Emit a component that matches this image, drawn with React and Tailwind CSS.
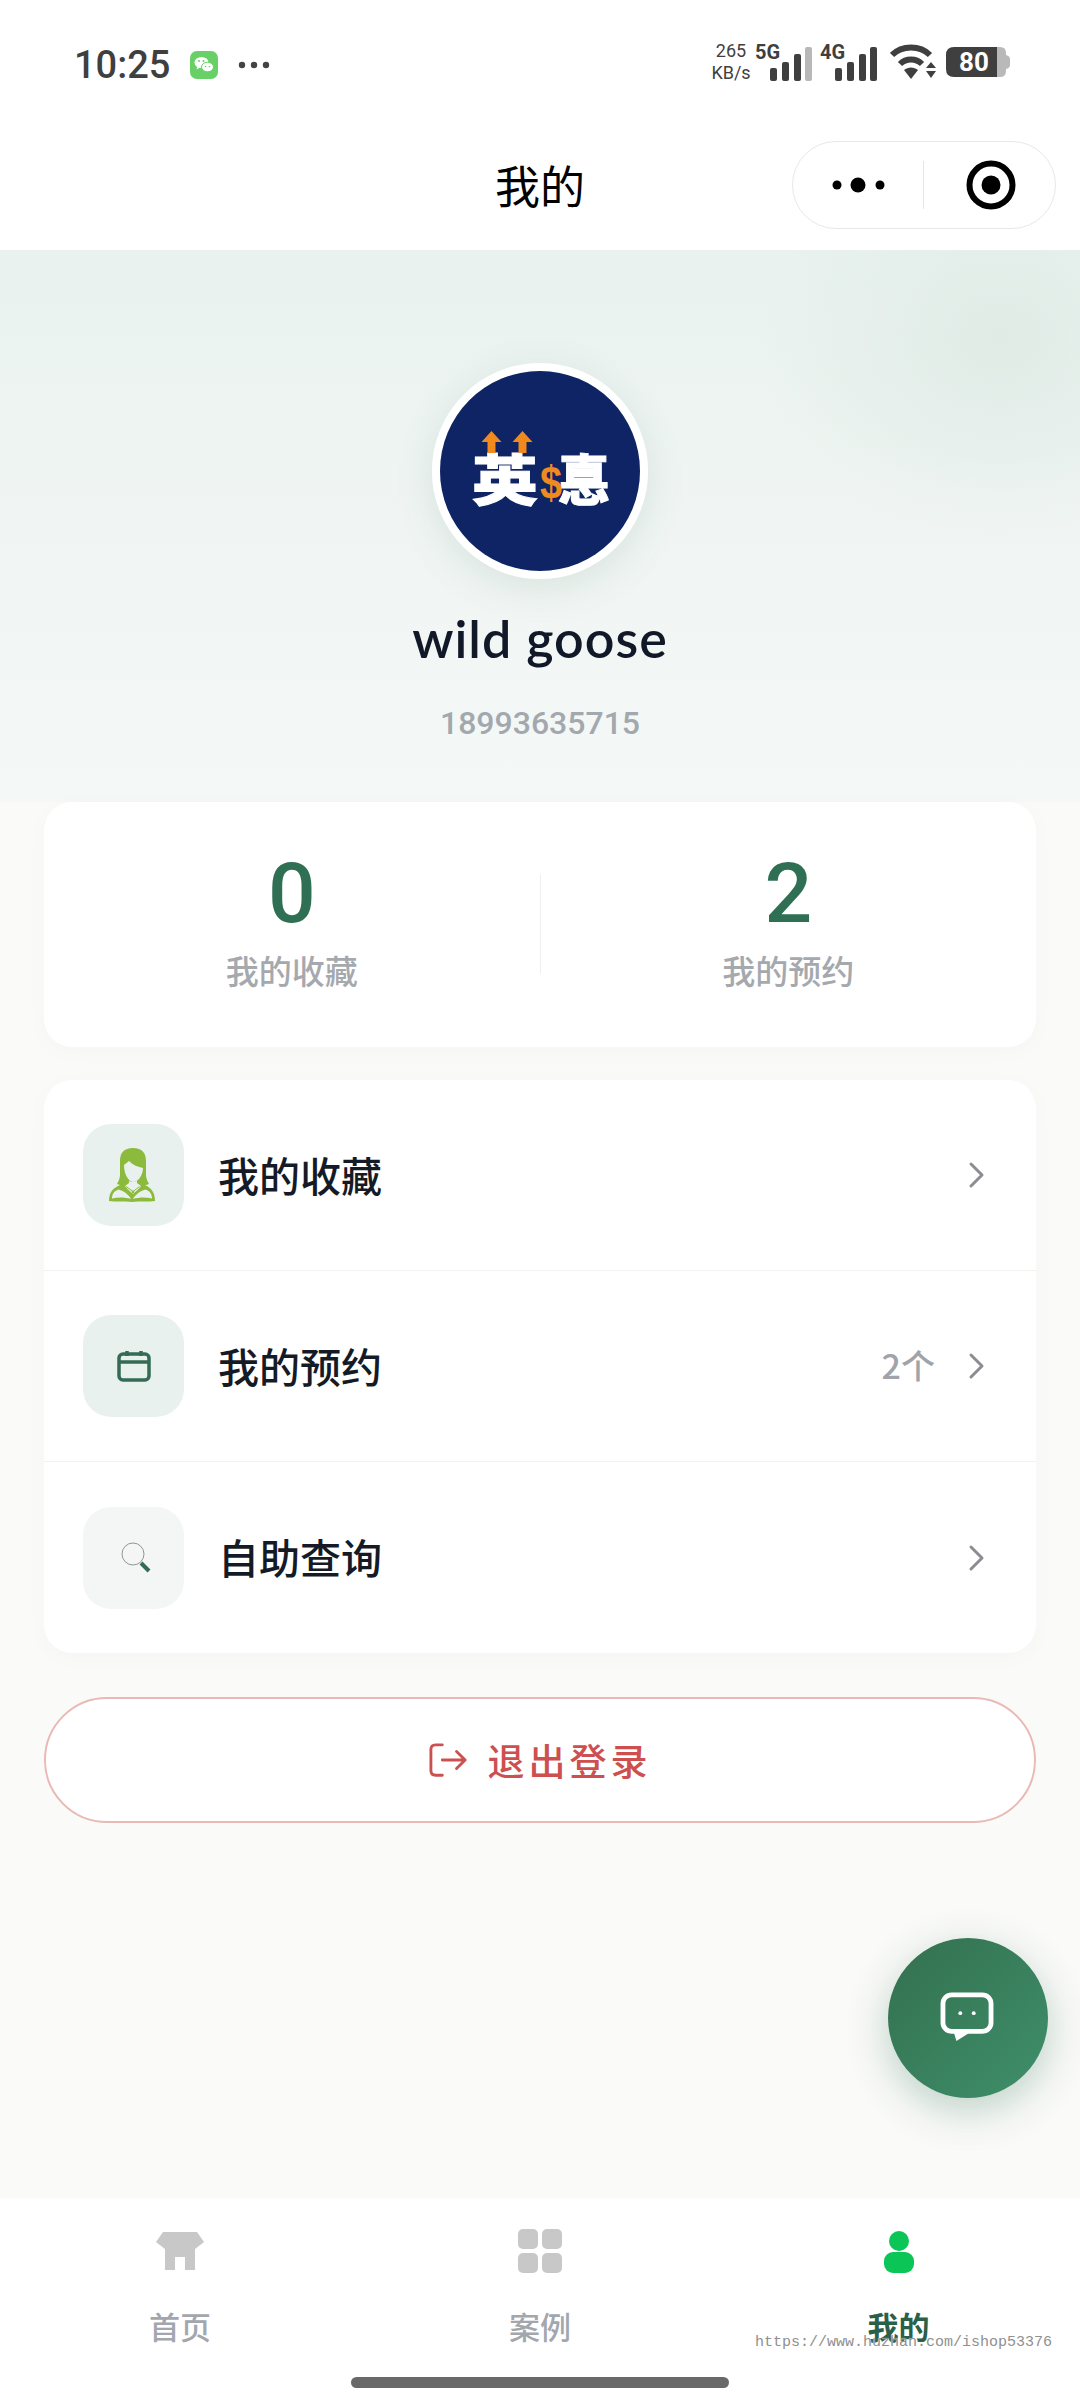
import React from "react";

const Chevron = () => (
  <svg width="18" height="28" viewBox="0 0 18 28" fill="none" className="shrink-0">
    <path d="M3 3l11 11L3 25" stroke="#8b8d90" strokeWidth="3" strokeLinecap="round" strokeLinejoin="round" />
  </svg>
);

const Bars = ({ lastLight }) => (
  <svg width="43" height="34" viewBox="0 0 43 34" className="block">
    <rect x="0" y="21" width="7" height="13" rx="2" fill="#3f3f3f" />
    <rect x="12" y="15" width="7" height="19" rx="2" fill="#3f3f3f" />
    <rect x="24" y="7" width="7" height="27" rx="2" fill="#3f3f3f" />
    <rect x="35" y="0" width="7" height="34" rx="2" fill={lastLight ? "#b8b8b8" : "#3f3f3f"} />
  </svg>
);

const WeChat = () => (
  <svg width="28" height="28" viewBox="0 0 28 28">
    <rect width="28" height="28" rx="7" fill="#67d066" />
    <ellipse cx="11.5" cy="11.5" rx="7" ry="5.6" fill="#fff" />
    <path d="M7.5 15l-1 3.4 3.6-2z" fill="#fff" />
    <ellipse cx="17.5" cy="16" rx="6" ry="4.8" fill="#fff" stroke="#67d066" strokeWidth="1" />
    <circle cx="9" cy="10" r="1" fill="#67d066" />
    <circle cx="13.5" cy="10" r="1" fill="#67d066" />
    <circle cx="15.5" cy="15.5" r=".8" fill="#67d066" />
    <circle cx="19.5" cy="15.5" r=".8" fill="#67d066" />
  </svg>
);

const StatusBar = () => (
  <div className="h-[125px] pt-[45px] pl-[74px] pr-[70px] flex items-start justify-between text-[#3f3f3f]">
    <div className="flex items-center h-[40px] font-[Roboto]">
      <span className="text-[38px] leading-[40px] font-medium w-[116px]">10:25</span>
      <WeChat />
      <svg width="32" height="8" viewBox="0 0 32 8" className="ml-[20px]">
        <circle cx="4" cy="4" r="3.2" fill="#444" />
        <circle cx="16" cy="4" r="3.2" fill="#444" />
        <circle cx="28" cy="4" r="3.2" fill="#444" />
      </svg>
    </div>
    <div className="flex items-start font-[Roboto] -mt-[1px]">
      <div className="flex flex-col items-center w-[42px] text-[18px] leading-[22px] -mt-[4px]">
        <span>265</span>
        <span>KB/s</span>
      </div>
      <div className="relative w-[64px] h-[36px] ml-[3px]">
        <span className="absolute left-0 -top-[3px] text-[20px] leading-[22px] font-bold">5G</span>
        <div className="absolute left-[15px] top-[3px]"><Bars lastLight /></div>
      </div>
      <div className="relative w-[58px] h-[36px] ml-[1px]">
        <span className="absolute left-0 -top-[3px] text-[20px] leading-[22px] font-bold">4G</span>
        <div className="absolute left-[15px] top-[3px]"><Bars /></div>
      </div>
      <svg width="46" height="36" viewBox="0 0 46 36" className="ml-[12px]">
        <path d="M2 11C12 1 30 1 40 11" fill="none" stroke="#3f3f3f" strokeWidth="6" />
        <path d="M10 20c6-6 16-6 22 0" fill="none" stroke="#3f3f3f" strokeWidth="6" />
        <path d="M14 26c4-3.4 10-3.4 14 0l-7 9z" fill="#3f3f3f" />
        <path d="M36 24l5-6 5 6zM36 27l5 7 5-7z" fill="#3f3f3f" />
      </svg>
      <div className="ml-[10px] relative">
        <svg width="64" height="36" viewBox="0 0 64 36" className="block">
          <path d="M50 3h4q6 0 6 6v2q4 1 4 4v6q0 3-4 4v2q0 6-6 6h-4z" fill="#b9b9b9" />
          <path d="M8 3h43v30H8q-8 0-8-8V11q0-8 8-8z" fill="#3f3f3f" />
        </svg>
        <span className="absolute left-[13px] top-[3px] text-[26px] leading-[30px] font-bold text-white">80</span>
      </div>
    </div>
  </div>
);

const NavBar = () => (
  <div className="relative h-[125px] flex items-center justify-center -mt-[4px]">
    <span className="text-[45px] leading-[60px] text-black mt-[3px]">我的</span>
    <div className="absolute left-[792px] top-[20px] w-[264px] h-[88px] rounded-full border border-[#e8e8e8] bg-white flex items-center">
      <div className="w-[130px] flex justify-center">
        <svg width="54" height="16" viewBox="0 0 54 16" className="ml-[1px]">
          <circle cx="5" cy="8" r="4.5" fill="#000" />
          <circle cx="26" cy="8" r="7.5" fill="#000" />
          <circle cx="48" cy="8" r="4.5" fill="#000" />
        </svg>
      </div>
      <div className="w-px h-[48px] bg-[#e6e6e6]" />
      <div className="flex-1 flex justify-center">
        <svg width="50" height="50" viewBox="0 0 50 50" className="ml-[3px]">
          <circle cx="25" cy="25" r="21.5" fill="none" stroke="#000" strokeWidth="6" />
          <circle cx="25" cy="25" r="9.5" fill="#000" />
        </svg>
      </div>
    </div>
  </div>
);

const Logo = () => (
  <svg width="200" height="200" viewBox="0 0 200 200" className="block rounded-full">
    <rect width="200" height="200" fill="#0e2465" />
    <text x="32" y="129" fontSize="55" fontWeight="900" fill="#fff" stroke="#fff" strokeWidth="1" fontFamily="'Noto Sans CJK SC',sans-serif" textLength="66" lengthAdjust="spacingAndGlyphs">英</text>
    <path d="M51.5 60l-10 11h6v11h8V71h6zM82.5 60l-10 11h6v11h8V71h6z" fill="#f08a1e" />
    <text x="118" y="129" fontSize="55" fontWeight="900" fill="#fff" stroke="#fff" strokeWidth="1" fontFamily="'Noto Sans CJK SC',sans-serif" textLength="52" lengthAdjust="spacingAndGlyphs">惪</text>
    <text x="100" y="128" fontSize="47" fontWeight="700" fill="#f08a1e" fontFamily="'Liberation Sans',sans-serif" textLength="22" lengthAdjust="spacingAndGlyphs">$</text>
  </svg>
);

const Hero = () => (
  <div className="h-[552px] flex flex-col items-center pt-[113px] bg-[radial-gradient(ellipse_240px_200px_at_1000px_90px,#e0ebe6,transparent),linear-gradient(180deg,#e9f2ef_0%,#f0f5f3_50%,#f4f8f6_100%)]">
    <div className="rounded-full border-[8px] border-white shadow-[0_10px_40px_rgba(47,111,83,0.12)]">
      <Logo />
    </div>
    <div className="mt-[28px] text-[52px] leading-[62px] font-semibold text-[#111827] font-[Lato] tracking-[1px]">wild goose</div>
    <div className="mt-[34px] text-[32px] leading-[40px] font-medium text-[#a3a8ae] font-[Roboto]">18993635715</div>
  </div>
);

const Stat = ({ value, label }) => (
  <div className="flex-1 flex flex-col items-center -mt-[3px]">
    <div className="text-[84px] leading-[84px] font-medium text-[#2f6f53] font-[Roboto]">{value}</div>
    <div className="mt-[12px] text-[33px] leading-[44px] font-medium text-[#a5a9ae]">{label}</div>
  </div>
);

const Stats = () => (
  <div className="mx-[44px] h-[245px] rounded-[28px] bg-white flex items-center pb-[2px] shadow-[0_4px_24px_rgba(0,0,0,0.025)]">
    <Stat value="0" label="我的收藏" />
    <div className="w-px h-[100px] bg-[#eef0ef]" />
    <Stat value="2" label="我的预约" />
  </div>
);

const WomanIcon = () => (
  <svg width="46" height="54" viewBox="9 7 46 54" className="-ml-[3px]">
    <path d="M33 7C24 7 20 12 20 20V34C20 38 18 41 17 43C22 45 27 46 33 46C39 46 44 45 49 43C48 41 46 38 46 34V20C46 12 42 7 33 7z" fill="#8cba3c" />
    <path d="M24 24C26 22 28 21 29 20C33 24 38 26 43 27C43 34 38 41 33.5 41C29 41 24 34 24 24z" fill="#e8f1ee" />
    <path d="M9 60C9 52 12 48 18 45L27 41H39L47 45C52 48 55 52 55 60C48 61 40 60 32 61C24 60 16 61 9 60z" fill="#8cba3c" />
    <path d="M29 39.500C31 41.500 35 41.500 37 39.500V42L41 45C38 49 35 51 33 53C31 51 28 49 25 45L29 42z" fill="#e8f1ee" />
    <path d="M12 57.500C12 53 14 50 18.500 48.500C24 50 29 54 31 58C25 56 18 56 12 57.500zM52 57.500C52 53 50 50 45.500 48.500C40 50 35 54 33 58C39 56 46 56 52 57.500z" fill="#e8f1ee" />
    <path d="M26 45.500L33 50.500L39.500 45.500" fill="none" stroke="#8cba3c" strokeWidth="1" />
    <circle cx="33" cy="51" r="1.300" fill="#8cba3c" />
  </svg>
);

const CalendarIcon = () => (
  <svg width="34" height="32" viewBox="0 0 34 32" fill="none" stroke="#356b55" strokeWidth="3.5">
    <rect x="2" y="4" width="30" height="26" rx="4" />
    <path d="M2 12h30" />
    <path d="M10 1v5M24 1v5" />
  </svg>
);

const SearchIcon = () => (
  <svg width="30" height="32" viewBox="0 0 30 32" fill="none" className="ml-[4px]">
    <circle cx="12" cy="12" r="11" stroke="#8f9796" strokeWidth="1" />
    <path d="M20 21l8 8" stroke="#356b55" strokeWidth="4" />
  </svg>
);

const Row = ({ icon, box, label, extra, last }) => (
  <div className={`h-[191px] pl-[39px] pr-[50px] flex items-center ${last ? "" : "border-b border-[#f2f2f0]"}`}>
    <div className={`w-[101px] h-[102px] rounded-[28px] flex items-center justify-center ${box}`}>{icon}</div>
    <div className="ml-[34px] -mt-[3px] flex-1 text-[41px] leading-[56px] font-medium text-[#151b26]">{label}</div>
    {extra && <div className="mr-[33px] -mt-[2px] text-[34px] leading-[44px] font-medium text-[#a0a4aa]">{extra}</div>}
    <Chevron />
  </div>
);

const Menu = () => (
  <div className="mx-[44px] mt-[33px] rounded-[28px] bg-white flex flex-col shadow-[0_4px_24px_rgba(0,0,0,0.025)]">
    <Row icon={<WomanIcon />} box="bg-[#e8f1ee]" label="我的收藏" />
    <Row icon={<CalendarIcon />} box="bg-[#e8f1ee]" label="我的预约" extra="2个" />
    <Row icon={<SearchIcon />} box="bg-[#f4f5f5]" label="自助查询" last />
  </div>
);

const Logout = () => (
  <div className="mx-[44px] mt-[44px] h-[126px] rounded-full border-2 border-[#e9b9b4] bg-white flex items-center justify-center gap-[21px]">
    <svg width="38" height="36" viewBox="0 0 40 36" fill="none" stroke="#cd5050" strokeWidth="3" strokeLinecap="round" strokeLinejoin="round">
      <path d="M14 2H7Q2 2 2 7v22q0 5 5 5h7" />
      <path d="M14 18h24M29 9l9 9-9 9" />
    </svg>
    <span className="text-[37px] leading-[48px] font-medium tracking-[4px] text-[#cd4f4f]">退出登录</span>
  </div>
);

const Fab = () => (
  <div className="absolute left-[888px] top-[1938px] w-[160px] h-[160px] rounded-full bg-[linear-gradient(135deg,#33704f,#3f8f6b)] shadow-[0_12px_40px_rgba(47,111,83,0.3)] flex items-center justify-center">
    <svg width="54" height="50" viewBox="0 0 56 52" fill="none" className="-ml-[3px] -mt-[2px]">
      <rect x="3" y="3" width="50" height="38" rx="9" stroke="#fff" strokeWidth="5" />
      <path d="M14 41l3 10 14-9z" fill="#fff" />
      <circle cx="21" cy="22" r="2" fill="#fff" />
      <circle cx="35" cy="22" r="2" fill="#fff" />
    </svg>
  </div>
);

const Tab = ({ icon, label, active }) => (
  <div className="flex-1 flex flex-col items-center">
    <div className="h-[44px] flex items-end">{icon}</div>
    <div className={`mt-[33px] text-[31px] leading-[40px] ${active ? "font-bold text-[#2a5f4a] -ml-[3px]" : "font-medium text-[#a3a7ad]"}`}>{label}</div>
  </div>
);

const TabBar = () => (
  <div className="relative h-[202px] bg-white flex flex-col">
    <div className="flex pt-[31px]">
      <Tab
        label="首页"
        icon={
          <svg width="48" height="39" viewBox="0 0 48 39" className="mb-[2px]">
            <path d="M7 0h34l7 10-9 7v21H29V25H19v13H9V17L0 10z" fill="#c8c8c8" />
          </svg>
        }
      />
      <Tab
        label="案例"
        icon={
          <svg width="44" height="44" viewBox="0 0 44 44">
            <rect width="20" height="20" rx="5" fill="#c8c8c8" />
            <rect x="24" width="20" height="20" rx="5" fill="#c8c8c8" />
            <rect y="24" width="20" height="20" rx="5" fill="#c8c8c8" />
            <rect x="24" y="24" width="20" height="20" rx="5" fill="#c8c8c8" />
          </svg>
        }
      />
      <Tab
        active
        label="我的"
        icon={
          <svg width="30" height="42" viewBox="0 0 30 42" className="-ml-[2px]">
            <circle cx="15" cy="10" r="10" fill="#0cc557" />
            <rect y="21" width="30" height="21" rx="9" fill="#0cc557" />
          </svg>
        }
      />
    </div>
    <div className="mt-[31px] w-[378px] h-[11px] rounded-full bg-[#696969] mx-auto" />
    <span className="absolute left-[755px] top-[136px] text-[15px] leading-[18px] text-[#8f8f8f] font-['Liberation_Mono'] [text-shadow:0_0_1px_#ffffff]">https://www.huzhan.com/ishop53376</span>
  </div>
);

export default function App() {
  return (
    <div className="relative w-[1080px] h-[2400px] overflow-hidden bg-[#fafaf8] flex flex-col font-['Noto_Sans_CJK_SC',sans-serif]">
      <div className="h-[250px] bg-white">
        <StatusBar />
        <NavBar />
      </div>
      <Hero />
      <div className="flex-1">
        <Stats />
        <Menu />
        <Logout />
      </div>
      <TabBar />
      <Fab />
    </div>
  );
}
